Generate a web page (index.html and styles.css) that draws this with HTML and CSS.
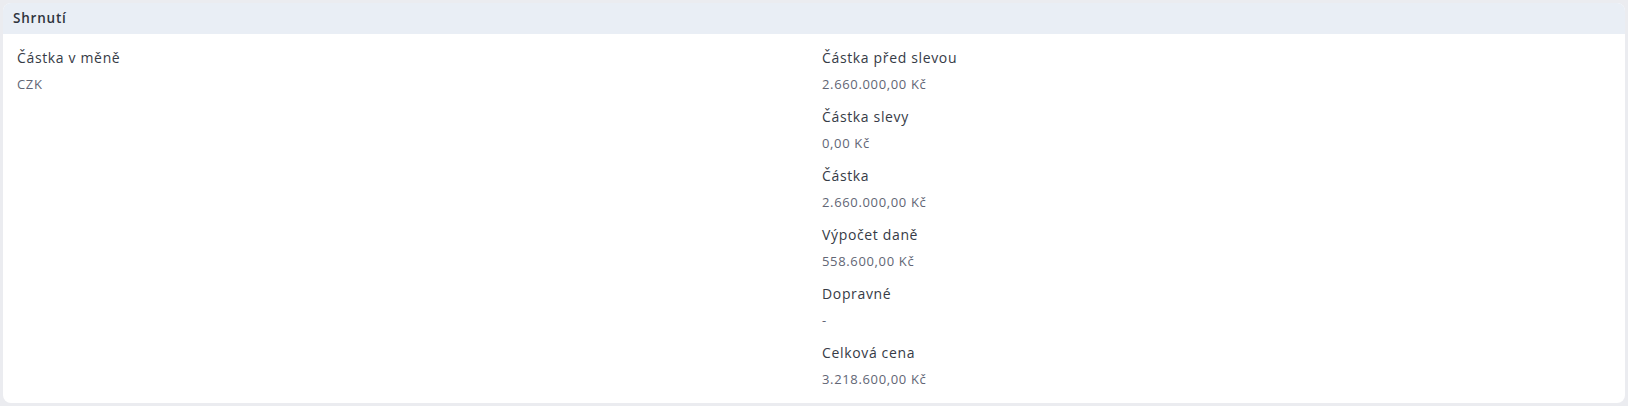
FILE: index.html
```html
<!DOCTYPE html>
<html lang="cs">
<head>
<meta charset="utf-8">
<title>Shrnutí</title>
<link rel="stylesheet" href="styles.css">
</head>
<body>
<section class="card">
  <header class="card-header">Shrnutí</header>
  <div class="card-body">
    <div class="col">
      <div class="field">
        <div class="label">Částka v měně</div>
        <div class="value">CZK</div>
      </div>
    </div>
    <div class="col">
      <div class="field">
        <div class="label">Částka před slevou</div>
        <div class="value">2.660.000,00 Kč</div>
      </div>
      <div class="field">
        <div class="label">Částka slevy</div>
        <div class="value">0,00 Kč</div>
      </div>
      <div class="field">
        <div class="label">Částka</div>
        <div class="value">2.660.000,00 Kč</div>
      </div>
      <div class="field">
        <div class="label">Výpočet daně</div>
        <div class="value">558.600,00 Kč</div>
      </div>
      <div class="field">
        <div class="label">Dopravné</div>
        <div class="value">-</div>
      </div>
      <div class="field">
        <div class="label">Celková cena</div>
        <div class="value">3.218.600,00 Kč</div>
      </div>
    </div>
  </div>
</section>
</body>
</html>
```
FILE: styles.css
```css
html, body {
  margin: 0;
  padding: 0;
}
body {
  background: #ebecf0;
  padding: 3px;
  font-family: "Open Sans", "Noto Sans", sans-serif;
  height: 406px;
  box-sizing: border-box;
}
.card {
  background: #ffffff;
  border-radius: 8px;
  height: 400px;
  overflow: hidden;
  display: flex;
  flex-direction: column;
}
.card-header {
  background: #e9eef5;
  height: 31px;
  line-height: 31px;
  padding-left: 10px;
  font-size: 13.5px;
  font-weight: 600;
  letter-spacing: 0.8px;
  color: #2f343d;
}
.card-body {
  display: grid;
  grid-template-columns: 1fr 1fr;
  column-gap: 16px;
  padding: 12px 14px 0 14px;
}
.col {
  display: flex;
  flex-direction: column;
  gap: 10px;
}
.label {
  font-size: 14px;
  line-height: 24px;
  letter-spacing: 0.65px;
  color: #363b46;
}
.value {
  padding-top: 3px;
  font-size: 13px;
  line-height: 22px;
  letter-spacing: 0.65px;
  font-weight: 400;
  color: #626675;
}
```
